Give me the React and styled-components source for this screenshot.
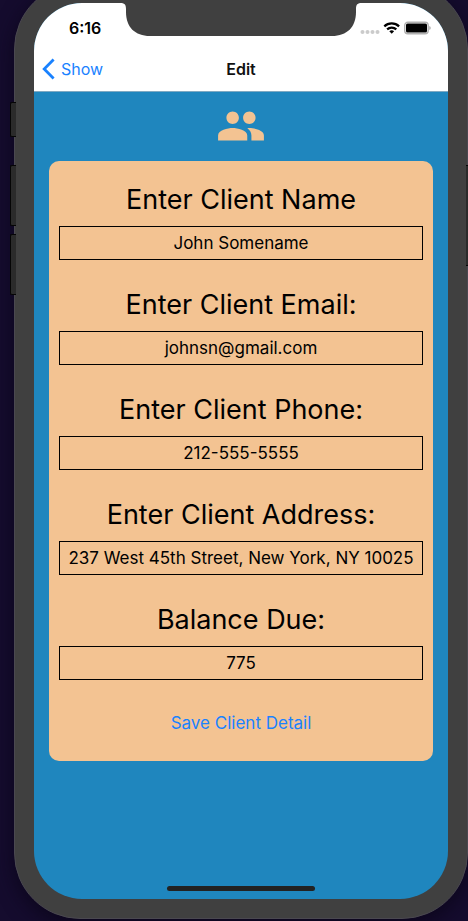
import React from "react";
import styled, { createGlobalStyle } from "styled-components";
import { MdPeople } from "react-icons/md";

const GlobalStyle = createGlobalStyle`
  *, *::before, *::after { box-sizing: border-box; }
  body {
    margin: 0;
    background: #150c2e;
    font-family: Inter, "Liberation Sans", sans-serif;
    color: #000;
  }
`;

const Desktop = styled.div`
  display: flex;
  min-height: 100vh;
  padding: 0 0 2px 14px;
  overflow: hidden;
  background: #150c2e;
`;

const Phone = styled.div`
  position: relative;
  display: flex;
  flex: 1;
  margin-top: -17px;
  padding: 19px;
  border: 1px solid #4a4850;
  border-radius: 66px;
  background: #404040;
  box-shadow: 0 6px 20px #0c061c;
`;

const SideButton = styled.span`
  position: absolute;
  top: ${(p) => p.$top}px;
  ${(p) => p.$side}: -5px;
  width: 6px;
  height: ${(p) => p.$height}px;
  border: 1px solid #050505;
  border-${(p) => (p.$side === "left" ? "right" : "left")}: 0;
  border-radius: ${(p) => (p.$side === "left" ? "2px 0 0 2px" : "0 2px 2px 0")};
  background: #2b2b2b;
`;

const Screen = styled.div`
  position: relative;
  display: flex;
  flex: 1;
  flex-direction: column;
  min-width: 0;
  overflow: hidden;
  border-radius: 48px;
  background: #1f86be;
`;

const Notch = styled.svg`
  position: absolute;
  top: 0;
  left: 50%;
  width: 242px;
  height: 33px;
  margin-left: -121px;
`;

const Header = styled.header`
  background: #fff;
  border-bottom: 1px solid #7fa9c2;
`;

const StatusBar = styled.div`
  display: flex;
  align-items: center;
  justify-content: space-between;
  height: 44px;
  padding: 6px 17px 0 35px;
`;

const Time = styled.time`
  font-size: 16px;
  line-height: 20px;
  font-weight: 600;
`;

const StatusIcons = styled.svg`
  width: 71px;
  height: 14px;
`;

const NavBar = styled.nav`
  display: grid;
  grid-template-columns: 1fr auto 1fr;
  align-items: center;
  height: 44px;
  padding: 0 8px;
`;

const BackLink = styled.a`
  display: flex;
  align-items: center;
  gap: 6px;
  justify-self: start;
  color: #1a82ff;
  font-size: 16px;
  line-height: 20px;
  text-decoration: none;
`;

const Chevron = styled.svg`
  width: 13px;
  height: 22px;
`;

const Title = styled.h1`
  margin: 0;
  color: #111;
  font-size: 16px;
  line-height: 20px;
  font-weight: 600;
`;

const Content = styled.main`
  display: flex;
  flex: 1;
  flex-direction: column;
  align-items: center;
  gap: 10px;
  padding: 9px 15px;
`;

const ClientIcon = styled(MdPeople)`
  width: 50px;
  height: 50px;
  color: #f3c392;
`;

const Card = styled.form`
  display: flex;
  flex-direction: column;
  gap: 27px;
  align-self: stretch;
  padding: 21px 10px 22px;
  border-radius: 10px;
  background: #f3c392;
`;

const Field = styled.div`
  display: flex;
  flex-direction: column;
  gap: 8px;
`;

const Label = styled.label`
  font-size: 27px;
  line-height: 36px;
  text-align: center;
`;

const Input = styled.input`
  width: 100%;
  height: 34px;
  padding: 0 4px;
  border: 1px solid #000;
  border-radius: 0;
  background: transparent;
  color: #000;
  font-family: inherit;
  font-size: 17px;
  text-align: center;
`;

const SaveButton = styled.button`
  align-self: center;
  padding: 0;
  border: 0;
  background: none;
  color: #1a82ff;
  font-family: inherit;
  font-size: 17px;
  line-height: 32px;
  cursor: pointer;
`;

const HomeIndicator = styled.div`
  align-self: center;
  width: 148px;
  height: 5px;
  margin-bottom: 8px;
  border-radius: 3px;
  background: #222;
`;

const sideButtons = [
  { id: "mute", side: "left", top: 118, height: 35 },
  { id: "volume-up", side: "left", top: 181, height: 61 },
  { id: "volume-down", side: "left", top: 250, height: 61 },
  { id: "power", side: "right", top: 181, height: 101 },
];

const fields = [
  { id: "name", label: "Enter Client Name", type: "text", value: "John Somename" },
  { id: "email", label: "Enter Client Email:", type: "email", value: "johnsn@gmail.com" },
  { id: "phone", label: "Enter Client Phone:", type: "tel", value: "212-555-5555" },
  { id: "address", label: "Enter Client Address:", type: "text", value: "237 West 45th Street, New York, NY 10025" },
  { id: "balance", label: "Balance Due:", type: "text", value: "775" },
];

function StatusGlyphs() {
  return (
    <StatusIcons viewBox="0 0 71 14" aria-hidden="true">
      <g fill="#cbcbcb">
        <circle cx="2.500" cy="11" r="2" />
        <circle cx="7.500" cy="11" r="2" />
        <circle cx="12.500" cy="11" r="2" />
        <circle cx="17.500" cy="11" r="2" />
      </g>
      <g fill="none" stroke="#000" strokeWidth="2.2">
        <path d="M24.300 5.400a10.600 10.600 0 0 1 14.800 0" />
        <path d="M27.100 8.400a6.600 6.600 0 0 1 9.200 0" />
      </g>
      <path d="M29.300 10.300a3.500 3.500 0 0 1 4.800 0l-2.400 2.500z" fill="#000" />
      <rect x="44.700" y="1.200" width="23.500" height="11.600" rx="3.200" fill="#fff" stroke="#b0b0b0" strokeWidth="1.400" />
      <rect x="46" y="2.500" width="21" height="9" rx="1.600" fill="#000" />
      <path d="M69.400 5v4c1.600-.6 1.600-3.400 0-4z" fill="#999" />
    </StatusIcons>
  );
}

export default function App() {
  return (
    <>
      <GlobalStyle />
      <Desktop>
        <Phone>
          {sideButtons.map((b) => (
            <SideButton key={b.id} $side={b.side} $top={b.top} $height={b.height} />
          ))}
          <Screen>
            <Header>
              <StatusBar>
                <Time>6:16</Time>
                <StatusGlyphs />
              </StatusBar>
              <NavBar>
                <BackLink href="#show">
                  <Chevron viewBox="0 0 13 22" aria-hidden="true">
                    <path d="M11.600 1.400 2.200 11l9.400 9.600" fill="none" stroke="currentColor" strokeWidth="2.800" />
                  </Chevron>
                  Show
                </BackLink>
                <Title>Edit</Title>
              </NavBar>
            </Header>
            <Notch viewBox="0 0 242 33" aria-hidden="true">
              <path
                d="M0 0c4.500 0 6 1.500 6 6v3c0 15 9 24 24 24h182c15 0 24-9 24-24V6c0-4.500 1.500-6 6-6z"
                fill="#404040"
              />
            </Notch>
            <Content>
              <ClientIcon aria-hidden="true" />
              <Card onSubmit={(e) => e.preventDefault()}>
                {fields.map((f) => (
                  <Field key={f.id}>
                    <Label htmlFor={f.id}>{f.label}</Label>
                    <Input id={f.id} type={f.type} defaultValue={f.value} />
                  </Field>
                ))}
                <SaveButton type="submit">Save Client Detail</SaveButton>
              </Card>
            </Content>
            <HomeIndicator />
          </Screen>
        </Phone>
      </Desktop>
    </>
  );
}
